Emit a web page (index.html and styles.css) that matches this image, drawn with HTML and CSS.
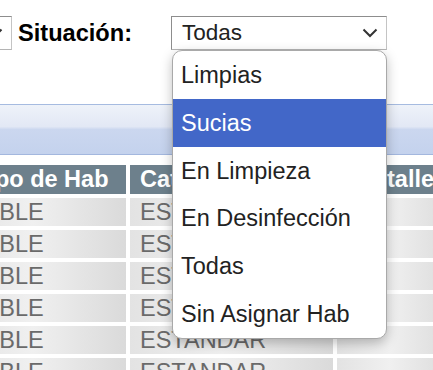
FILE: index.html
```html
<!DOCTYPE html>
<html lang="es">
<head>
    <meta charset="UTF-8">
    <meta name="viewport" content="width=device-width, initial-scale=1.0">
    <title>Habitaciones</title>
    <link rel="stylesheet" href="styles.css">
</head>
<body>
    <div class="filters">
        <div class="select prev">
            <span>Todos</span>
            <svg class="chev" width="16" height="10" viewBox="0 0 16 10"><path d="M1.5 1.5 L8 8 L14.5 1.5" fill="none" stroke="#333" stroke-width="2"/></svg>
        </div>
        <label class="lbl">Situación:</label>
        <div class="select-wrap">
            <div class="select">
                <span>Todas</span>
                <svg class="chev" width="16" height="10" viewBox="0 0 16 10"><path d="M1.5 1.5 L8 8 L14.5 1.5" fill="none" stroke="#333" stroke-width="2"/></svg>
            </div>
            <ul class="options">
                <li>Limpias</li>
                <li class="active">Sucias</li>
                <li>En Limpieza</li>
                <li>En Desinfección</li>
                <li>Todas</li>
                <li>Sin Asignar Hab</li>
            </ul>
        </div>
    </div>

    <div class="band"></div>

    <table class="grid">
        <thead>
            <tr>
                <th class="c1">Tipo de Hab</th>
                <th class="c2">Categoría</th>
                <th class="c3">Detalle</th>
            </tr>
        </thead>
        <tbody>
            <tr><td>DOBLE</td><td>ESTANDAR</td><td></td></tr>
            <tr><td>DOBLE</td><td>ESTANDAR</td><td></td></tr>
            <tr><td>DOBLE</td><td>ESTANDAR</td><td></td></tr>
            <tr><td>DOBLE</td><td>ESTANDAR</td><td></td></tr>
            <tr><td>DOBLE</td><td>ESTANDAR</td><td></td></tr>
            <tr><td>DOBLE</td><td>ESTANDAR</td><td></td></tr>
        </tbody>
    </table>
</body>
</html>
```

FILE: styles.css
```css
body{margin: 0; background: #fff; font-family: "Liberation Sans", Arial, sans-serif; overflow: hidden;}

.filters{display: flex; align-items: center; margin-top: 16px; height: 34px;}
.select{display: flex; align-items: center; justify-content: space-between; box-sizing: border-box;
 height: 34px; border: 1px solid #8d8d8d; border-right-color: #c4c4c4; border-bottom-color: #b4b4b4;
 background: #fff; padding: 0 8px 0 10px; font-size: 22.5px; color: #222;}
.select.prev{width: 120px; margin-left: -108px; flex: none;}
.select .chev{flex: none;}
.lbl{font-weight: bold; font-size: 23.6px; color: #000; margin-left: 6px; width: 153px; flex: none;}
.select-wrap{position: relative; width: 216px; flex: none;}
.select-wrap .select{width: 216px;}

.options{position: absolute; top: 34px; left: 1px; width: 215px; margin: 0; padding: 0; list-style: none;
 background: #fff; border: 1px solid #a9a9a9; border-radius: 10px; overflow: hidden;
 box-shadow: 0 4px 12px rgba(0,0,0,.25); z-index: 2; box-sizing: border-box;}
.options li{height: 47.8px; line-height: 48.6px; padding-left: 8px; font-size: 23.5px; color: #222;}
.options li.active{background: #4267c8; color: #fff;}

.band{height: 49px; margin-top: 54px; border-top: 1px solid #a6bbe0; border-bottom: 1px solid #a3b7de;
 background: linear-gradient(#eef2f9 0%, #e2e8f5 44%, #cbd7ef 50%, #c4d2ed 100%);}

.grid{width: 505px; table-layout: fixed; margin: 6px 0 0 -47px; border-spacing: 4px; font-size: 23.5px;}
.grid th{height: 29px; padding: 0 10px; background: #6d808c; color: #fff; font-weight: bold;
 white-space: nowrap; overflow: hidden;}
.grid .c1{width: 149px; text-align: center;}
.grid .c2{width: 183px; text-align: left;}
.grid .c3{width: 97px; text-align: center;}
.grid td{height: 28px; padding: 0 10px; color: #6a6a6a; white-space: nowrap; overflow: hidden;
 background: linear-gradient(to right, #e3e3e3, #f0f0f0 45%, #dadada);}
.grid td:first-child{padding-left: 7px;}
```
